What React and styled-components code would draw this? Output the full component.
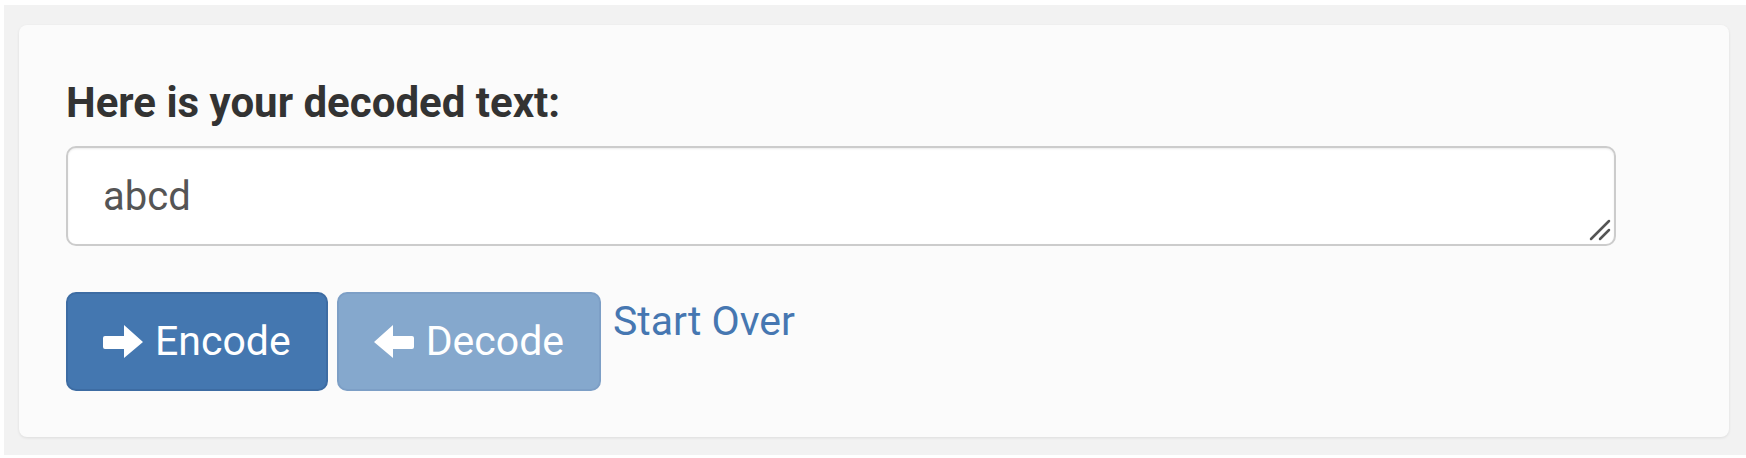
import React from "react";
import styled, { createGlobalStyle } from "styled-components";

const GlobalStyle = createGlobalStyle`
  body {
    margin: 0;
    background: #ffffff;
    font-family: Roboto, "Liberation Sans", sans-serif;
  }
`;

const Frame = styled.div`
  margin: 5px 0 0 4px;
  height: 450px;
  box-sizing: border-box;
  padding: 20px 17px 0 15px;
  background: #f2f2f2;
  display: flex;
  align-items: flex-start;
`;

const Card = styled.div`
  flex: 1;
  box-sizing: border-box;
  height: 412px;
  padding: 54px 48px 46px 47px;
  background: #fbfbfb;
  border-radius: 8px;
  box-shadow: 0 1px 3px rgba(0, 0, 0, 0.09);
  display: flex;
  flex-direction: column;
`;

const Label = styled.label`
  display: block;
  margin: 0 0 19px;
  font-size: 42px;
  line-height: 48px;
  font-weight: 700;
  color: #333333;
`;

const Field = styled.div`
  position: relative;
  width: 1550px;
`;

const TextBox = styled.textarea`
  display: block;
  box-sizing: border-box;
  width: 100%;
  height: 100px;
  margin: 0;
  padding: 22px 35px;
  border: 2px solid #cccccc;
  border-radius: 10px;
  background: #ffffff;
  box-shadow: inset 0 1px 2px rgba(0, 0, 0, 0.08);
  font-family: Roboto, "Liberation Sans", sans-serif;
  font-size: 40px;
  line-height: 53px;
  color: #555555;
  resize: none;
  outline: none;
`;

const Grip = styled.svg`
  position: absolute;
  right: 5px;
  bottom: 5px;
  pointer-events: none;
`;

const Actions = styled.div`
  display: flex;
  align-items: flex-start;
  margin-top: 46px;
`;

const Button = styled.button`
  display: flex;
  align-items: center;
  gap: 12px;
  box-sizing: border-box;
  height: 99px;
  margin-right: ${({ $last }) => ($last ? "12px" : "9px")};
  padding: 21px 35px;
  border: 2px solid ${({ $muted }) => ($muted ? "#7d9fc6" : "#3d6ca3")};
  border-radius: 10px;
  background: ${({ $muted }) => ($muted ? "#85a8cd" : "#4477b0")};
  color: #ffffff;
  font-family: Roboto, "Liberation Sans", sans-serif;
  font-size: 41px;
  line-height: 53px;
  cursor: ${({ $muted }) => ($muted ? "not-allowed" : "pointer")};
`;

const Link = styled.a`
  padding-top: 3px;
  font-size: 41px;
  line-height: 53px;
  color: #4677b1;
  text-decoration: none;
  cursor: pointer;
`;

const Arrow = ({ flip }) => (
  <svg
    width="40"
    height="33"
    viewBox="0 0 40 33"
    style={flip ? { transform: "scaleX(-1)" } : undefined}
  >
    <path d="M2 11h19V0l19 17-19 16V24H2a2 2 0 0 1-2-2v-9a2 2 0 0 1 2-2z" fill="#ffffff" />
  </svg>
);

export default function App() {
  return (
    <>
      <GlobalStyle />
      <Frame>
        <Card>
          <Label htmlFor="decoded">Here is your decoded text:</Label>
          <Field>
            <TextBox id="decoded" rows={1} defaultValue="abcd" />
            <Grip width="22" height="22" viewBox="0 0 22 22">
              <path d="M2 20L20 2M11 20l9-9" stroke="#555" strokeWidth="2.5" strokeLinecap="round" />
            </Grip>
          </Field>
          <Actions>
            <Button>
              <Arrow />
              Encode
            </Button>
            <Button $muted $last disabled>
              <Arrow flip />
              Decode
            </Button>
            <Link>Start Over</Link>
          </Actions>
        </Card>
      </Frame>
    </>
  );
}
